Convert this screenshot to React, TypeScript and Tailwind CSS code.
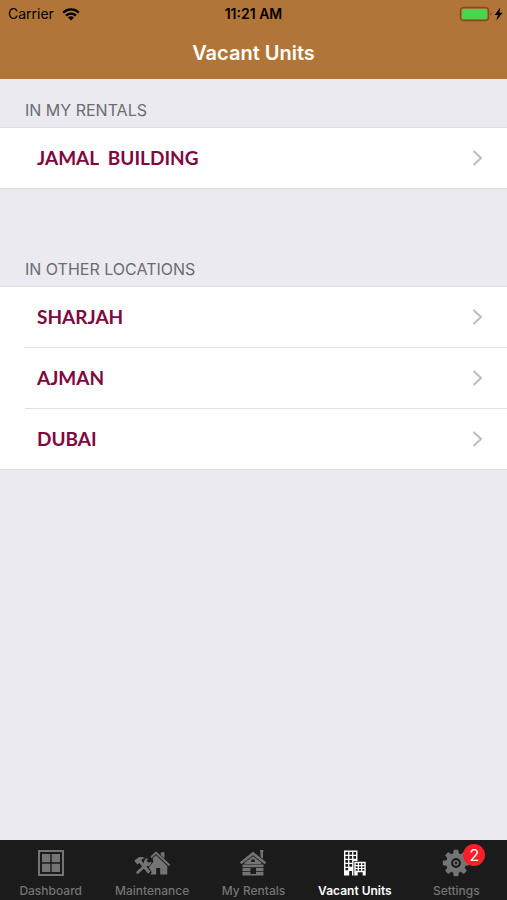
import type { ReactNode } from 'react'

const RENTALS = ['JAMAL  BUILDING']
const LOCATIONS = ['SHARJAH', 'AJMAN', 'DUBAI']

function WifiIcon() {
  return (
    <svg width="18" height="13" viewBox="0 0 18 13" fill="none" stroke="currentColor" strokeWidth="2.2" aria-hidden>
      <path d="M1.2 4.6C5.6 .4 12.4 .4 16.8 4.6" />
      <path d="M4 7.6c2.8-2.7 7.2-2.7 10 0" />
      <path d="M6 9.4c1.7-1.5 4.3-1.5 6 0L9 12.6z" fill="currentColor" stroke="none" />
    </svg>
  )
}

function BatteryIcon() {
  return (
    <svg width="44" height="16" viewBox="0 0 44 16" aria-hidden>
      <rect x="1.5" y="1.5" width="28" height="13" rx="3" fill="none" stroke="#7d4d1e" strokeWidth="1.3" />
      <rect x="3" y="3" width="25" height="10" rx="1.5" fill="#4cd44f" />
      <path d="M31.5 6v4c1.2-.5 1.2-3.5 0-4z" fill="#6e4217" />
      <path d="M41.3 1.5 35.7 9h3.2L37.400 14.500l6.200-7.800h-3.300z" fill="#000" />
    </svg>
  )
}

function DashboardIcon() {
  return (
    <svg width="28" height="28" viewBox="0 0 28 28" fill="currentColor" aria-hidden>
      <rect x="2" y="2" width="24" height="24" fill="none" stroke="currentColor" strokeWidth="2" />
      <path d="M5 5h8.3v8.3H5zM14.7 5H23v8.3h-8.3zM5 14.7h8.3V23H5zM14.7 14.7H23V23h-8.3z" />
    </svg>
  )
}

function MaintenanceIcon() {
  return (
    <svg width="38" height="28" viewBox="0 0 38 28" fill="currentColor" aria-hidden>
      <path d="M17.500 7.500 23 2.200 37.300 15.800 36 17.200 23 5 18.500 9.300z" />
      <path d="M27.800 3.200h3.700v6.200l-3.700-3.500z" />
      <path d="M23 6.200 34.300 17V25.500h-7.100v-6.500h-4v6.500h-5.700l1.200-2.500-3-4.500 4.500-5.500-.5-4z" />
      <path d="M1.200 11.800 5.400 8.500C7.600 7.700 9.800 8 12 9l-3.200 1.300-.2 1.400L17.500 22.500l-2.400 2.200L6.400 14l-2 1.400z" />
      <path d="M3.600 22.600 11 15.800c-1-3.300.8-6.400 3.800-6.900l-1 3.100 1.700 1.700 3-1.200c0 3.300-2.500 5.300-5.300 4.700L5.700 24.600c-1.500 1-3.300-.7-2.100-2z" />
    </svg>
  )
}

function RentalsIcon() {
  return (
    <svg width="28" height="28" viewBox="0 0 28 28" fill="currentColor" fillRule="evenodd" aria-hidden>
      <path d="M14 2.800 27.200 13.200 25.700 15.200 14 6.200 2.300 15.200.8 13.200z" />
      <path d="M21 1h3.500v1.500H24v7.300l-2.500-2V2.500H21z" />
      <path d="M14 7.200 22.500 13.700V15h-17v-1.300zM12.300 10.500v2.500h3.400v-2.500z" />
      <path d="M3.500 15.600h21v2.600h-21zM3.500 19h8v3h-8zM17 19h7.500v3H17zM3.500 22.800h8v3.700h-8zM17 22.800h7.500v3.700H17zM11.500 25h5.500v1.500h-5.500z" />
    </svg>
  )
}

function BuildingsIcon() {
  return (
    <svg width="28" height="28" viewBox="0 0 28 28" fill="currentColor" fillRule="evenodd" aria-hidden>
      <path d="M3 1.500h13.500V12H12.500v14.500H11V22H8.200v4.500H3zM4.400 3v2.700h2.700V3zM8.400 3v2.700h2.700V3zM12.400 3v2.700h2.700V3zM4.400 7v2.700h2.700V7zM8.400 7v2.700h2.700V7zM12.400 7v2.700h2.700V7zM4.400 11v2.700h2.700V11zM8.400 11v2.700h2.700V11zM4.400 15v2.700h2.700V15zM8.400 15v2.700h2.700V15zM4.400 19v2.200h2.700V19z" />
      <path d="M13.300 12.800H24.700v13.700h-3V23.200h-5v3.300h-3.400zM14.700 14.300v1.700h2v-1.700zM18 14.300v1.700h2v-1.700zM21.300 14.300v1.700h2v-1.700zM14.700 17.200v1.700h2v-1.700zM18 17.200v1.700h2v-1.700zM21.300 17.200v1.700h2v-1.700zM14.700 20.100v1.700h2v-1.700zM18 20.100v1.700h2v-1.700zM21.300 20.100v1.700h2v-1.700z" />
    </svg>
  )
}

const TEETH = [0, 45, 90, 135, 180, 225, 270, 315]

function GearIcon() {
  return (
    <svg width="28" height="28" viewBox="0 0 28 28" fill="currentColor" aria-hidden>
      {TEETH.map((angle) => (
        <path key={angle} d="M10.9 6 11.8 .8h4.400l.9 5.200z" transform={`rotate(${angle} 14 14)`} />
      ))}
      <circle cx="14" cy="14" r="7.4" fill="none" stroke="currentColor" strokeWidth="5" />
      <circle cx="14" cy="14" r="2" fill="none" stroke="currentColor" strokeWidth="1.6" />
    </svg>
  )
}

interface Tab {
  label: string
  icon: ReactNode
  active?: boolean
  badge?: number
}

const TABS: Tab[] = [
  { label: 'Dashboard', icon: <DashboardIcon /> },
  { label: 'Maintenance', icon: <MaintenanceIcon /> },
  { label: 'My Rentals', icon: <RentalsIcon /> },
  { label: 'Vacant Units', icon: <BuildingsIcon />, active: true },
  { label: 'Settings', icon: <GearIcon />, badge: 2 },
]

function UnitSection({ title, items }: { title: string; items: string[] }) {
  return (
    <section>
      <h2 className="flex h-12 items-end px-[25px] pb-[7px] text-base leading-5 text-[#6c6c71]">{title}</h2>
      <ul className="border-y border-[#dedde2] bg-white">
        {items.map((item, i) => (
          <li key={item} className="pl-[25px]">
            <a
              href="#"
              className={`box-content flex h-[60px] items-center justify-between pr-6 pl-3 ${i > 0 ? 'border-t border-[#e0dfe3]' : ''}`}
            >
              <span className="font-['Lato',sans-serif] text-[19px] font-bold whitespace-pre text-[#800640]">{item}</span>
              <svg width="11" height="18" viewBox="0 0 11 18" fill="none" stroke="#bdbdc1" strokeWidth="2" aria-hidden>
                <path d="m1.5 2 7.5 7-7.5 7" />
              </svg>
            </a>
          </li>
        ))}
      </ul>
    </section>
  )
}

export default function App() {
  return (
    <div className="flex min-h-screen flex-col bg-[#ebeaf0] font-['Inter',sans-serif]">
      <header className="bg-[#b07537]">
        <div className="grid h-7 grid-cols-3 items-center px-2 text-sm text-black">
          <div className="flex items-center gap-2">
            <span>Carrier</span>
            <WifiIcon />
          </div>
          <time className="text-center font-semibold">11:21 AM</time>
          <div className="-mr-1 flex justify-end">
            <BatteryIcon />
          </div>
        </div>
        <h1 className="flex h-[51px] items-center justify-center pb-0.5 text-xl font-semibold text-white">
          Vacant Units
        </h1>
      </header>

      <main className="flex flex-1 flex-col gap-[49px]">
        <UnitSection title="IN MY RENTALS" items={RENTALS} />
        <UnitSection title="IN OTHER LOCATIONS" items={LOCATIONS} />
      </main>

      <nav className="grid h-[60px] grid-cols-5 bg-[#1c1b1c]">
        {TABS.map(({ label, icon, active, badge }) => (
          <a
            key={label}
            href="#"
            aria-current={active ? 'page' : undefined}
            className={`flex flex-col items-center gap-1.5 pt-[9px] text-xs leading-4 ${active ? 'font-semibold text-white' : 'font-medium text-[#747474]'}`}
          >
            <span className="relative">
              <span className="block">{icon}</span>
              {badge && (
                <span className="absolute -top-[5px] -right-[15px] flex size-[22px] items-center justify-center rounded-full bg-[#fb1f28] text-base font-normal text-white">
                  {badge}
                </span>
              )}
            </span>
            <span>{label}</span>
          </a>
        ))}
      </nav>
    </div>
  )
}
